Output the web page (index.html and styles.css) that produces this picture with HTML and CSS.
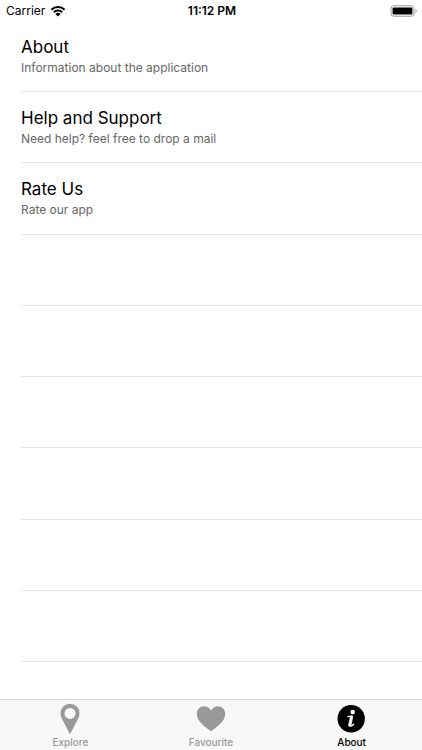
FILE: index.html
```html
<!DOCTYPE html>
<html lang="en">
<head>
<meta charset="utf-8">
<meta name="viewport" content="width=device-width, initial-scale=1">
<title>About</title>
<link rel="stylesheet" href="styles.css">
</head>
<body>
<div class="app">
  <header class="status">
    <div class="status-carrier">
      <span>Carrier</span>
      <svg class="wifi" viewBox="0 0 16 12" aria-hidden="true">
        <path d="M1.400 4.800a9.400 9.400 0 0 1 13.200 0M3.800 7.200a6 6 0 0 1 8.400 0" fill="none" stroke="#000" stroke-width="2"/>
        <path d="M5.400 9a3.700 3.700 0 0 1 5.200 0L8 11.600z" fill="#000"/>
      </svg>
    </div>
    <time class="status-time">11:12 PM</time>
    <svg class="battery" viewBox="0 0 28 12" aria-hidden="true">
      <rect x="1" y=".8" width="23" height="10.4" rx="2.6" fill="#fff" stroke="#999" stroke-width="1"/>
      <rect x="2.6" y="2.4" width="19.8" height="7.2" rx="1" fill="#000"/>
      <path d="M25.500 4v4c1.600-.5 1.600-3.500 0-4z" fill="#999"/>
    </svg>
  </header>
  <main class="list">
    <a class="row" href="#about"><span class="row-title">About</span><span class="row-detail">Information about the application</span></a>
    <a class="row" href="#help"><span class="row-title">Help and Support</span><span class="row-detail">Need help? feel free to drop a mail</span></a>
    <a class="row" href="#rate"><span class="row-title">Rate Us</span><span class="row-detail">Rate our app</span></a>
    <div class="row"></div>
    <div class="row"></div>
    <div class="row"></div>
    <div class="row"></div>
    <div class="row"></div>
    <div class="row"></div>
  </main>
  <nav class="tabs">
    <a class="tab" href="#explore">
      <svg class="tab-icon" viewBox="0 0 32 32" aria-hidden="true">
        <path fill-rule="evenodd" d="M16 .8a9.500 9.500 0 0 0-9.500 9.500c0 2.200.8 4.400 2 6.700L16 31.200 23.500 17c1.200-2.300 2-4.500 2-6.700A9.500 9.500 0 0 0 16 .8zm0 4.100a5.500 5.500 0 1 1 0 11 5.500 5.500 0 0 1 0-11z" fill="currentColor"/>
      </svg>
      <span>Explore</span>
    </a>
    <a class="tab" href="#favourite">
      <svg class="tab-icon" viewBox="0 0 32 32" aria-hidden="true">
        <path d="M16 28.300C10 24 1.800 18.500 1.800 10.800 1.800 6.400 4.900 3.200 8.900 3.200c3.200 0 5.700 1.600 7.100 4.300 1.400-2.700 3.900-4.300 7.100-4.300 4 0 7.100 3.200 7.100 7.600C30.200 18.500 22 24 16 28.300z" fill="currentColor"/>
      </svg>
      <span>Favourite</span>
    </a>
    <a class="tab tab-active" href="#about" aria-current="page">
      <svg class="tab-icon" viewBox="0 0 32 32" aria-hidden="true">
        <circle cx="15.200" cy="15.700" r="13.700" fill="currentColor"/>
        <circle cx="16.700" cy="9.100" r="2.300" fill="#fff"/>
        <path d="M11.500 13.500h4.300M13 21.500c0 2.500 3 1.700 5-.5" fill="none" stroke="#fff" stroke-width="1.600"/>
        <path d="M15.600 13.900l-1.700 7.700" stroke="#fff" stroke-width="3" stroke-linecap="round"/>
      </svg>
      <span>About</span>
    </a>
  </nav>
</div>
</body>
</html>
```
FILE: styles.css
```css
* {
  box-sizing: border-box;
}

body {
  margin: 0;
  background: #fff;
  color: #000;
  font-family: Inter, "Liberation Sans", sans-serif;
}

a {
  color: inherit;
  text-decoration: none;
}

.app {
  display: flex;
  flex-direction: column;
  min-height: 100vh;
}

.status {
  display: grid;
  grid-template-columns: 1fr auto 1fr;
  align-items: center;
  height: 21px;
  padding: 0 4px 0 6px;
  font-size: 12px;
}

.status-carrier {
  display: flex;
  align-items: center;
  gap: 5px;
}

.status-time {
  font-weight: 600;
}

.wifi {
  width: 16px;
  height: 12px;
}

.battery {
  width: 28px;
  height: 12px;
  justify-self: end;
}

.list {
  flex: 1;
  display: grid;
  grid-template-rows: repeat(9, 1fr);
  padding: 0 0 37px 21px;
}

.row {
  display: flex;
  flex-direction: column;
  padding-top: 15px;
  border-bottom: 1px solid #e6e6e6;
}

.row-title {
  font-size: 17px;
  line-height: 22px;
}

.row-detail {
  color: #666;
  font-size: 12px;
  line-height: 19px;
}

.tabs {
  display: grid;
  grid-template-columns: repeat(3, 1fr);
  padding: 3px 0 1px;
  border-top: 1px solid #d4d4d4;
  background: #f8f8f8;
}

.tab {
  display: flex;
  flex-direction: column;
  align-items: center;
  color: #999;
  font-size: 10px;
  font-weight: 500;
  line-height: 14px;
}

.tab-active {
  color: #000;
}

.tab-icon {
  width: 32px;
  height: 32px;
}
```
